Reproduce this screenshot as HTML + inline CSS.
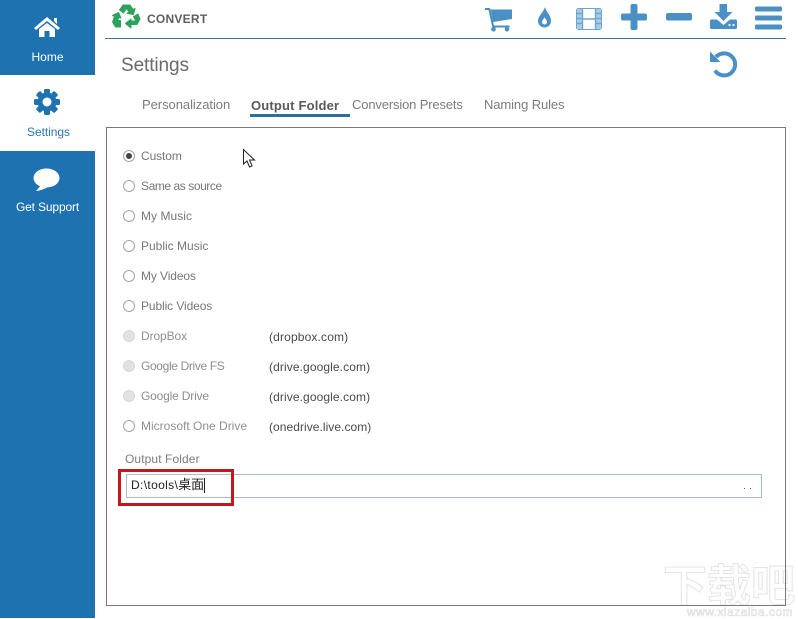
<!DOCTYPE html>
<html><head><meta charset="utf-8">
<style>
html,body{margin:0;padding:0;background:#fff}
body{width:798px;height:618px;position:relative;overflow:hidden;font-family:"Liberation Sans","Noto Sans CJK SC",sans-serif;color:#6b6b6b}
.a{position:absolute;white-space:nowrap}
.t{font-size:12px;line-height:16px}
.r{position:absolute;width:10px;height:10px;border:1px solid #a2a2a2;border-radius:50%;left:123px;background:#fff}
.d{background:#e2e2e2;border-color:#d8d8d8}
.u{color:#4a4a4a;left:269px;font-size:12px;line-height:16px}
.l{left:141px;font-size:12px;line-height:16px;color:#777}
.g{color:#8f8f8f}
svg{position:absolute;overflow:visible}
</style></head><body>
<div class="a" style="left:0;top:0;width:95px;height:75px;background:#1f72b0"></div>
<div class="a" style="left:0;top:151px;width:95px;height:467px;background:#1f72b0"></div>

<svg style="left:34px;top:16px" width="26" height="22" viewBox="0 0 26 22"><path d="M13 1 L26 12 L24 14 L13 5 L2 14 L0 12 Z M20 2h3v6l-3-3Z M5 13 L13 7 L21 13 V21 H15.500 V15 H10.500 V21 H5 Z" fill="#fff"/></svg>
<div class="a" style="left:0;width:95px;top:49px;text-align:center;color:#fff;font-size:12px;line-height:16px">Home</div>

<svg style="left:34px;top:89px" width="26" height="26" viewBox="0 0 26 26"><g fill="#1f72b0"><circle cx="13" cy="13" r="9.500"/><rect x="10" y="0" width="6" height="26" rx="1.500"/><rect x="10" y="0" width="6" height="26" rx="1.500" transform="rotate(45 13 13)"/><rect x="10" y="0" width="6" height="26" rx="1.500" transform="rotate(90 13 13)"/><rect x="10" y="0" width="6" height="26" rx="1.500" transform="rotate(135 13 13)"/></g><circle cx="13" cy="13" r="4.500" fill="#fff"/></svg>
<div class="a" style="left:1px;width:95px;top:124px;text-align:center;color:#2c78b0;font-size:12px;line-height:16px;letter-spacing:-.05px">Settings</div>

<svg style="left:33px;top:168px" width="27" height="23" viewBox="0 0 27 23"><ellipse cx="13.500" cy="10" rx="13" ry="9.500" fill="#fff"/><path d="M9 16 L3 23 Q12 22 17 17 Z" fill="#fff"/></svg>
<div class="a" style="left:0;width:95px;top:199px;text-align:center;color:#fff;font-size:12px;line-height:16px;letter-spacing:-.15px">Get Support</div>

<svg style="left:108px;top:0" width="36" height="34" viewBox="0 0 36 34" fill="#2ca35c" stroke="#2ca35c" stroke-width="1" stroke-linejoin="round"><path d="M11.500 10 L15 5 H22 L25 9.500 L27 8.500 L25.500 14.500 L19 13.500 L21 12 L18.500 8.500 L15.500 13 Z"/><path d="M10.500 12.500 L13 18 L11 17.500 L9.500 20.500 H12.500 V27 H7.500 L4.500 22 L6.500 16.500 L4.500 15.500 Z"/><path d="M25.500 16.500 L30 14 L32 19 L29 24.500 H23 V28 L17.500 23.500 L23 19 V21 H28 Z"/></svg>
<div class="a" style="left:147px;top:11px;font-size:12px;font-weight:bold;line-height:16px;color:#5e5e5e;letter-spacing:.25px">CONVERT</div>
<div class="a" style="left:105px;top:38px;width:681px;height:1px;background:#3f7296"></div>

<!-- toolbar -->
<svg style="left:485px;top:7px" width="28" height="25" viewBox="0 0 28 25" fill="#4a90c4"><path d="M5.500 2.500 H27 V12 L8 15 Z"/><path d="M0 1 H5 L9 18.500 H24.500 V20.500 H7.300 L3.500 3 H0 Z"/><circle cx="8.500" cy="22.300" r="2.300"/><circle cx="22" cy="22.300" r="2.300"/></svg>
<svg style="left:537px;top:7px" width="15" height="21" viewBox="0 0 15 21"><path d="M8 0 C9 5 14 8 14 14 A6.500 6.500 0 0 1 1 14 C1 9 6 6 8 0Z" fill="#4a90c4"/><path d="M7.500 10 C8 12 10 13 10 15 A2.500 2.500 0 0 1 5 15 C5 13 7 12 7.500 10Z" fill="#fff"/></svg>
<svg style="left:576px;top:8px" width="26" height="22" viewBox="0 0 26 22"><rect x="0.500" y="0.500" width="25" height="21" rx="2" fill="none" stroke="#6fa5ce"/><rect x="1" y="1" width="5" height="20" fill="#a9cbe3"/><rect x="20" y="1" width="5" height="20" fill="#a9cbe3"/><path d="M6.500 1V21M19.500 1V21M1 5.500H6M1 10.500H6M1 15.500H6M20 5.500H25M20 10.500H25M20 15.500H25M7 11H19" stroke="#6fa5ce" stroke-width="1.400" fill="none"/></svg>
<svg style="left:621px;top:4px" width="26" height="26" viewBox="0 0 26 26" fill="#4a90c4"><rect x="9.500" y="0" width="7" height="26" rx="2"/><rect x="0" y="9.500" width="26" height="7" rx="2"/></svg>
<svg style="left:666px;top:13px" width="26" height="8" viewBox="0 0 26 8"><rect width="26" height="7.500" rx="2" fill="#4a90c4"/></svg>
<svg style="left:710px;top:4px" width="27" height="26" viewBox="0 0 27 26" fill="#4a90c4"><path d="M9.500 0 H17 V8 H22.500 L13.500 17 L4.500 8 H9.500 Z"/><path d="M1.500 15.500 H7 L13.500 21 L20 15.500 H25.500 A1.500 1.500 0 0 1 27 17 V23.500 A1.500 1.500 0 0 1 25.500 25 H1.500 A1.500 1.500 0 0 1 0 23.500 V17 A1.500 1.500 0 0 1 1.500 15.500Z"/><circle cx="19.500" cy="21" r="1.100" fill="#fff"/><circle cx="23.500" cy="21" r="1.100" fill="#fff"/></svg>
<svg style="left:755px;top:6px" width="27" height="24" viewBox="0 0 27 24" fill="#4a90c4"><rect width="27" height="5" y="0.500" rx="1.500"/><rect width="27" height="5" y="9.500" rx="1.500"/><rect width="27" height="5" y="18.500" rx="1.500"/></svg>

<div class="a" style="left:121px;top:54px;font-size:19px;line-height:24px;color:#6a6a6a;letter-spacing:-.1px">Settings</div>
<svg style="left:710px;top:50px" width="27" height="27" viewBox="0 0 27 27"><path d="M6 7 A11 11 0 1 1 5 20.500" fill="none" stroke="#4a90c4" stroke-width="4"/><path d="M0 1.500 L10.500 12 L0 12 Z" fill="#4a90c4"/></svg>

<div class="a" style="left:142px;top:97px;font-size:13px;line-height:16px;color:#7c7c7c;letter-spacing:-.05px">Personalization</div>
<div class="a" style="left:251px;top:98px;font-size:13px;line-height:16px;font-weight:bold;color:#5a5a5a;letter-spacing:.18px">Output Folder</div>
<div class="a" style="left:250px;top:114px;width:100px;height:3px;background:#2b6f9c"></div>
<div class="a" style="left:352px;top:97px;font-size:13px;line-height:16px;color:#7c7c7c;letter-spacing:-.15px">Conversion Presets</div>
<div class="a" style="left:484px;top:97px;font-size:13px;line-height:16px;color:#7c7c7c;letter-spacing:-.1px">Naming Rules</div>

<!-- watermark -->
<div class="a" style="left:663px;top:550px;font-size:44px;line-height:64px;font-weight:bold;color:#fff;-webkit-text-stroke:1px #e4e4e4;font-family:'Noto Sans CJK SC',sans-serif">下载吧</div>
<div class="a" style="left:687px;top:606px;font-size:12px;line-height:12px;color:#fff;-webkit-text-stroke:.6px #dcdcdc;letter-spacing:.45px">www.xiazaiba.com</div>

<div class="a" style="left:106px;top:127px;width:678px;height:477px;border:1px solid #777"></div>

<div class="r" style="top:150px"></div><div class="a" style="left:126px;top:153px;width:6px;height:6px;border-radius:50%;background:#444"></div>
<div class="a l" style="top:148px;letter-spacing:-.1px">Custom</div>
<div class="r" style="top:180px"></div><div class="a l" style="top:178px;letter-spacing:-.43px">Same as source</div>
<div class="r" style="top:210px"></div><div class="a l" style="top:208px;letter-spacing:.05px">My Music</div>
<div class="r" style="top:240px"></div><div class="a l" style="top:238px">Public Music</div>
<div class="r" style="top:270px"></div><div class="a l" style="top:268px;letter-spacing:-.1px">My Videos</div>
<div class="r" style="top:300px"></div><div class="a l" style="top:298px;letter-spacing:-.1px">Public Videos</div>
<div class="r d" style="top:330px"></div><div class="a l g" style="top:328px;letter-spacing:-.1px">DropBox</div><div class="a u" style="top:329px;letter-spacing:.15px">(dropbox.com)</div>
<div class="r d" style="top:360px"></div><div class="a l g" style="top:358px;letter-spacing:-.35px">Google Drive FS</div><div class="a u" style="top:359px;letter-spacing:.1px">(drive.google.com)</div>
<div class="r d" style="top:390px"></div><div class="a l g" style="top:388px;letter-spacing:-.18px">Google Drive</div><div class="a u" style="top:389px;letter-spacing:.1px">(drive.google.com)</div>
<div class="r" style="top:420px"></div><div class="a l g" style="top:418px">Microsoft One Drive</div><div class="a u" style="top:419px;letter-spacing:.05px">(onedrive.live.com)</div>

<div class="a t" style="left:125px;top:451px;color:#7c7c7c;letter-spacing:.1px">Output Folder</div>
<div class="a" style="left:126px;top:474px;width:634px;height:22px;border:1px solid #a9bac9"></div>
<div class="a" style="left:118px;top:469px;width:110px;height:31px;border:3px solid #c4161c"></div>
<div class="a" style="left:131px;top:477px;font-size:12px;line-height:16px;color:#222;letter-spacing:.35px">D:\tools\<span style="font-size:13px;letter-spacing:0">桌面</span></div>
<div class="a" style="left:204px;top:478px;width:1px;height:15px;background:#222"></div>
<div class="a" style="left:744px;top:488px;width:1px;height:1px;background:#555"></div>
<div class="a" style="left:750px;top:488px;width:1px;height:1px;background:#555"></div>

<!-- cursor -->
<svg style="left:243px;top:149px" width="13" height="19" viewBox="0 0 13 19"><path d="M0.500 0.500 V15 L4 12 L6.500 18 L9 17 L6.500 11 H11.500 Z" fill="#fff" stroke="#222" stroke-width="1"/></svg>
</body></html>
